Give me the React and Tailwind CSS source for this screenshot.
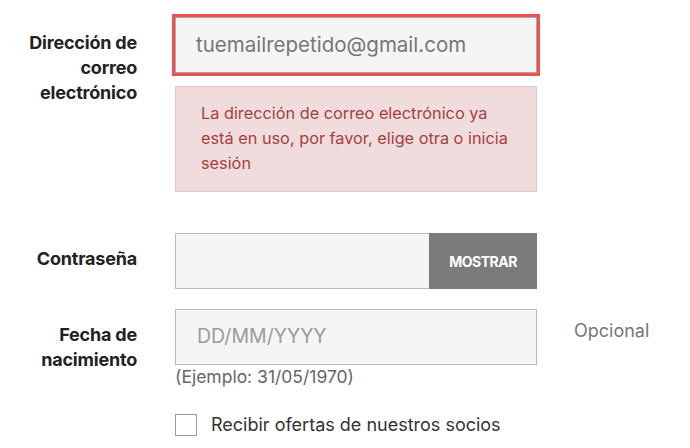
const Label = ({ children, className = '' }) => (
  <div
    className={`w-[137px] shrink-0 text-right text-[18px] font-bold leading-[25px] tracking-[-0.2px] text-[#222] ${className}`}
  >
    {children}
  </div>
);

export default function App() {
  return (
    <div className="w-[690px] h-[448px] overflow-hidden bg-white pt-[17px] font-['Inter',sans-serif]">
      {/* email */}
      <div className="flex items-start">
        <Label className="pt-[13px]">
          Dirección de
          <br />
          correo
          <br />
          electrónico
        </Label>
        <div className="ml-[38px] w-[362px]">
          <div className="h-[56px] border border-[#a8a8a8] bg-[#f5f5f5] pl-[20px] flex items-center text-[20.5px] text-[#777] outline-3 outline-solid outline-[#ef5050]">
            tuemailrepetido@gmail.com
          </div>
          <div className="mt-[13px] h-[106px] border border-[#e6c6c8] bg-[#f0dcdd] px-[25px] pt-[14px] text-[16.3px] leading-[25px] text-[#a5403f]">
            La dirección de correo electrónico ya está en uso, por favor, elige
            otra o inicia sesión
          </div>
        </div>
      </div>

      {/* password */}
      <div className="mt-[41px] flex items-start">
        <Label className="pt-[13px]">Contraseña</Label>
        <div className="ml-[38px] w-[362px] h-[56px] flex">
          <div className="flex-1 border border-[#bbb] border-r-0 bg-[#f5f5f5]" />
          <button className="w-[108px] bg-[#7b7b7b] text-white text-[14px] font-bold tracking-[-0.5px]">
            MOSTRAR
          </button>
        </div>
      </div>

      {/* birth date */}
      <div className="mt-[20px] flex items-start">
        <Label className="pt-[13px]">
          Fecha de
          <br />
          nacimiento
        </Label>
        <div className="ml-[38px] w-[362px]">
          <div className="h-[56px] border border-[#bbb] bg-[#f5f5f5] pl-[21px] flex items-center text-[19.5px] text-[#9b9b9b]">
            DD/MM/YYYY
          </div>
          <div className="mt-[1px] text-[17.5px] leading-[22px] text-[#666]">
            (Ejemplo: 31/05/1970)
          </div>
        </div>
        <div className="ml-[37px] pt-[10px] text-[18px] leading-[24px] text-[#777]">
          Opcional
        </div>
      </div>

      {/* partners */}
      <div className="mt-[23px] flex items-center pl-[175px]">
        <div className="w-[22px] h-[22px] border border-[#999] bg-white" />
        <span className="ml-[14px] text-[18px] text-[#333]">
          Recibir ofertas de nuestros socios
        </span>
      </div>
    </div>
  );
}
